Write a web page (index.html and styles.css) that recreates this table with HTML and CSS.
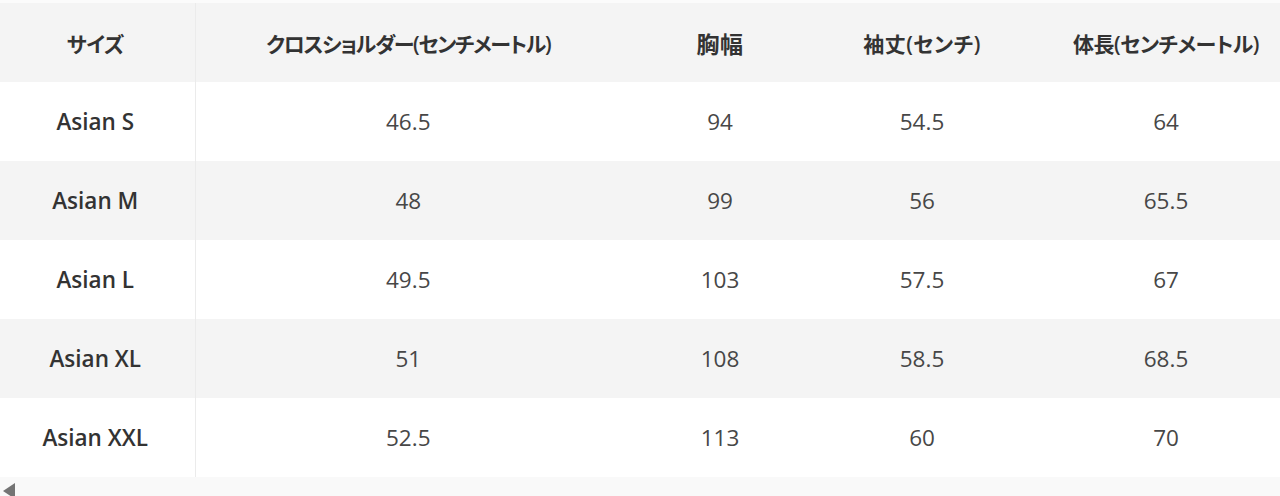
FILE: index.html
```html
<!DOCTYPE html>
<html lang="ja">
<head>
<meta charset="utf-8">
<link rel="stylesheet" href="styles.css">
</head>
<body>
<div class="page">
  <div class="top-strip"></div>
  <div class="scroller">
    <table class="size-table">
      <colgroup>
        <col class="c1"><col class="c2"><col class="c3"><col class="c4"><col class="c5">
      </colgroup>
      <thead>
        <tr>
          <th class="first">サイズ</th>
          <th class="kana-tight">クロスショルダー(センチメートル)</th>
          <th class="kanji-wide">胸幅</th>
          <th class="kana-loose">袖丈(センチ)</th>
          <th>体長(センチメートル)</th>
        </tr>
      </thead>
      <tbody>
        <tr><td class="first">Asian S</td><td>46.5</td><td>94</td><td>54.5</td><td>64</td></tr>
        <tr><td class="first">Asian M</td><td>48</td><td>99</td><td>56</td><td>65.5</td></tr>
        <tr><td class="first">Asian L</td><td>49.5</td><td>103</td><td>57.5</td><td>67</td></tr>
        <tr><td class="first">Asian XL</td><td>51</td><td>108</td><td>58.5</td><td>68.5</td></tr>
        <tr><td class="first">Asian XXL</td><td>52.5</td><td>113</td><td>60</td><td>70</td></tr>
      </tbody>
    </table>
  </div>
  <div class="hscroll"><span class="arrow-left"></span></div>
</div>
</body>
</html>
```
FILE: styles.css
```css
html, body {
  margin: 0;
  padding: 0;
  background: #ffffff;
}
.page {
  width: 1280px;
  height: 496px;
  overflow: hidden;
  font-family: "Open Sans", "Noto Sans CJK JP", sans-serif;
}
.top-strip {
  height: 3px;
  background: #fbfbfb;
}
.scroller {
  width: 1280px;
  overflow: hidden;
}
.size-table {
  border-collapse: collapse;
  table-layout: fixed;
  width: 1307px;
}
.c1 { width: 195px; }
.c2 { width: 426px; }
.c3 { width: 198px; }
.c4 { width: 206px; }
.c5 { width: 282px; }
.size-table th,
.size-table td {
  height: 79px;
  padding: 0;
  text-align: center;
  vertical-align: middle;
  font-size: 22.5px;
  white-space: nowrap;
}
.size-table th {
  background: #f4f4f4;
  color: #333333;
  font-weight: 600;
  font-size: 21px;
  font-feature-settings: "palt" 1;
  letter-spacing: -0.5px;
}
.size-table th.kana-tight {
  letter-spacing: -1.35px;
}
.size-table th.kana-loose {
  letter-spacing: 0.5px;
}
.size-table th.kanji-wide {
  font-size: 23px;
  letter-spacing: 0.5px;
}
.size-table td {
  color: #474747;
  font-weight: 400;
}
.size-table td.first {
  color: #333333;
  font-weight: 600;
}
.size-table .first {
  border-right: 1px solid #ebebeb;
  padding-right: 4px;
}
.size-table tbody tr:nth-child(even) td {
  background: #f4f4f4;
}
.hscroll {
  height: 19px;
  background: #f9f9f9;
  display: flex;
  align-items: flex-start;
  padding: 6px 0 0 3px;
  box-sizing: border-box;
  overflow: hidden;
}
.arrow-left {
  flex: none;
  width: 0;
  height: 0;
  border-top: 8px solid transparent;
  border-bottom: 8px solid transparent;
  border-right: 12px solid #747474;
}
```
